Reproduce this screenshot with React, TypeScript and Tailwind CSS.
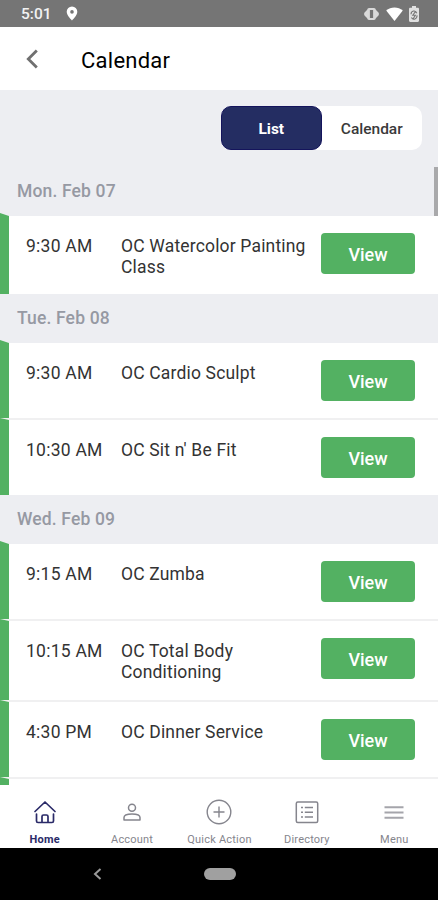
import React, { useState } from 'react';

type CalendarEvent = { time: string; title: string; height: string };
type Day = { label: string; events: CalendarEvent[] };

const DAYS: Day[] = [
    {
        label: 'Mon. Feb 07',
        events: [{ time: '9:30 AM', title: 'OC Watercolor Painting Class', height: 'h-[81px]' }],
    },
    {
        label: 'Tue. Feb 08',
        events: [
            { time: '9:30 AM', title: 'OC Cardio Sculpt', height: 'h-[78px]' },
            { time: '10:30 AM', title: "OC Sit n' Be Fit", height: 'h-[77px]' },
        ],
    },
    {
        label: 'Wed. Feb 09',
        events: [
            { time: '9:15 AM', title: 'OC Zumba', height: 'h-[78px]' },
            { time: '10:15 AM', title: 'OC Total Body Conditioning', height: 'h-[81px]' },
            { time: '4:30 PM', title: 'OC Dinner Service', height: 'h-[77px]' },
        ],
    },
];

const StatusBar: React.FC = () => (
    <div className="flex h-[27px] shrink-0 items-center justify-between bg-[#757575] pl-[21px] pr-[18px] text-white">
        <div className="flex items-center gap-[14px]">
            <span className="pt-[2px] text-[15.5px] font-medium leading-none text-[#f2f2f2]">5:01</span>
            <svg width="12" height="15" viewBox="0 0 12 15" fill="currentColor">
                <path fillRule="evenodd" d="M6 .5A5.3 5.3 0 0 0 .7 5.8C.7 9.5 6 14.5 6 14.5s5.3-5 5.3-8.7A5.3 5.3 0 0 0 6 .5Zm0 3.6a1.8 1.8 0 1 1 0 3.6 1.8 1.8 0 0 1 0-3.6Z" />
            </svg>
        </div>
        <div className="flex items-center">
            <svg width="17" height="14" viewBox="0 0 17 14" fill="#d9d9d9">
                <path d="M6 1h5q1.500 0 2 2l2.500 2.500q1 1.500 0 3L13 11q-.5 2-2 2H6q-1.500 0-2-2L1.500 8.500q-1-1.500 0-3L4 3q.5-2 2-2Z" />
                <rect x="6.9" y="3" width="3.2" height="8" fill="#757575" />
            </svg>
            <svg className="ml-[6px]" width="17" height="14" viewBox="0 0 17 14" fill="currentColor">
                <path d="M8.5 14 .2 3.6C2.5 1.6 5.4.4 8.5.4s6 1.2 8.3 3.2L8.5 14Z" />
            </svg>
            <svg className="ml-[6px] mr-px" width="10" height="16" viewBox="0 0 10 16">
                <path fill="#e0e0e0" d="M3 0h4v1.800h1.800c.6 0 1.200.5 1.200 1.200v11.800c0 .7-.6 1.200-1.200 1.200H1.200C.6 16 0 15.500 0 14.800V3c0-.7.6-1.200 1.200-1.200H3V0Z" />
                <path fill="none" stroke="#757575" strokeWidth="1.1" d="M2 8.300A3 3.400 0 0 1 7.800 7.200M8 9.400A3 3.400 0 0 1 2.400 11.400M6.500 5.500 3.800 9.200h2.600L4 13" />
            </svg>
        </div>
    </div>
);

const EventRow: React.FC<{ event: CalendarEvent; first: boolean }> = ({ event, first }) => (
    <div
        className={`flex items-start border-l-[9px] border-l-[#53b162] bg-white pl-[17px] pt-[17px] text-[#333] ${event.height} ${
            first ? 'border-t-[3px] border-t-[#edeef2]' : 'border-t-2 border-t-[#f0f0f1]'
        }`}
    >
        <span className="w-[95px] pt-[2.5px] text-[17.5px] leading-[21px] tracking-[0.25px]">{event.time}</span>
        <span className="w-[200px] pt-[2.5px] text-[17.5px] leading-[21px] tracking-[0.17px]">{event.title}</span>
        <button className="h-[41px] w-[94px] rounded-[4px] bg-[#53b162] pt-px text-[18px] font-medium text-white">View</button>
    </div>
);

const NAV_ITEMS = [
    {
        label: 'Home',
        icon: (
            <svg width="24" height="24" viewBox="0 0 24 24" fill="none" stroke="currentColor" strokeWidth="1.7" strokeLinecap="round" strokeLinejoin="round">
                <path d="M2 11.5 12 2l10 9.5M3.5 14v7q0 1.5 1.5 1.5h14q1.5 0 1.5-1.5v-7M9 22.5v-6q0-1.5 1.5-1.5h3q1.5 0 1.5 1.5v6" />
            </svg>
        ),
    },
    {
        label: 'Account',
        icon: (
            <svg width="24" height="24" viewBox="0 0 24 24" fill="none" stroke="currentColor" strokeWidth="1.5">
                <circle cx="12" cy="7.7" r="3.5" />
                <path strokeLinejoin="round" d="M4 20v-2.5c0-2.4 3.5-3.5 8-3.5s8 1.1 8 3.5V20H4Z" />
            </svg>
        ),
    },
    {
        label: 'Quick Action',
        icon: (
            <svg width="26" height="26" viewBox="0 0 26 26" fill="none" stroke="currentColor" strokeWidth="1.4">
                <circle cx="13" cy="13" r="11.8" />
                <path d="M13 7.5v11M7.5 13h11" />
            </svg>
        ),
    },
    {
        label: 'Directory',
        icon: (
            <svg width="24" height="24" viewBox="0 0 24 24" fill="none" stroke="currentColor" strokeWidth="1.5">
                <rect x="1.3" y="2" width="21.4" height="20.5" rx="1.5" />
                <path d="M6 7.5h2M6 12.2h2M6 17h2M9.8 7.5H18M9.8 12.2H18M9.8 17H18" />
            </svg>
        ),
    },
    {
        label: 'Menu',
        icon: (
            <svg width="24" height="24" viewBox="0 0 24 24" fill="none" stroke="#a5a5ab" strokeWidth="2">
                <path d="M2.5 7.2h19M2.5 12.5h19M2.5 17.8h19" />
            </svg>
        ),
    },
];

const App: React.FC = () => {
    const [view, setView] = useState<'List' | 'Calendar'>('List');

    return (
        <div className="flex h-[900px] w-[438px] flex-col overflow-hidden bg-white font-['Roboto',sans-serif]">
            <StatusBar />

            <header className="flex h-[63px] shrink-0 items-center bg-white pl-[26px]">
                <svg width="12" height="20" viewBox="0 0 12 20" fill="none" stroke="#707070" strokeWidth="2.8">
                    <path d="M10.8 1.5 2.3 10l8.5 8.5" />
                </svg>
                <h1 className="ml-[43px] pt-[4px] text-[22px] leading-none tracking-[0.25px] text-black">Calendar</h1>
            </header>

            <div className="flex h-[77px] shrink-0 justify-end bg-[#edeef2] pr-4 pt-4">
                <div className="grid h-[44px] w-[201px] grid-cols-2 rounded-[10px] bg-white text-[15.5px] font-medium">
                    {(['List', 'Calendar'] as const).map((name) => (
                        <button
                            key={name}
                            onClick={() => setView(name)}
                            className={`rounded-[10px] pt-[3px] ${
                                view === name ? 'border border-[#14145c] bg-[#242d62] font-bold text-white' : 'text-[#3a3a3a]'
                            }`}
                        >
                            {name}
                        </button>
                    ))}
                </div>
            </div>

            <main className="relative h-[618px] shrink-0 overflow-hidden">
                {DAYS.map((day) => (
                    <section key={day.label}>
                        <h2 className="flex h-[46px] items-center bg-[#edeef2] pl-[17px] pt-[2px] text-[17.5px] font-medium tracking-[0.15px] text-[#9699a3]">
                            {day.label}
                        </h2>
                        {day.events.map((event, i) => (
                            <EventRow key={event.title} event={event} first={i === 0} />
                        ))}
                    </section>
                ))}
                <div className="h-[8px] border-l-[9px] border-t-2 border-l-[#53b162] border-t-[#f0f0f1]" />
                <div className="absolute right-0 top-0 h-[49px] w-[4px] bg-[#a9a9ab]" />
            </main>

            <nav className="grid h-[63px] shrink-0 grid-cols-5 bg-white pl-px">
                {NAV_ITEMS.map((item, i) => (
                    <div
                        key={item.label}
                        className={`flex flex-col items-center pt-[14px] text-[11px] ${
                            i === 0 ? 'font-bold text-[#2a2a68]' : 'text-[#85858d]'
                        }`}
                    >
                        <div className="flex h-[26px] items-center">{item.icon}</div>
                        <span className="mt-[8px] whitespace-nowrap leading-[14px] tracking-[0.2px]">{item.label}</span>
                    </div>
                ))}
            </nav>

            <div className="grid h-[52px] shrink-0 grid-cols-[93px_111px_1fr] items-center bg-black">
                <span />
                <svg width="9" height="12" viewBox="0 0 9 12" fill="none" stroke="#9a9a9a" strokeWidth="2">
                    <path d="M7.5 1 2 6l5.5 5" />
                </svg>
                <div className="h-[12px] w-[32px] rounded-full bg-[#a0a0a0]" />
            </div>
        </div>
    );
};

export default App;
